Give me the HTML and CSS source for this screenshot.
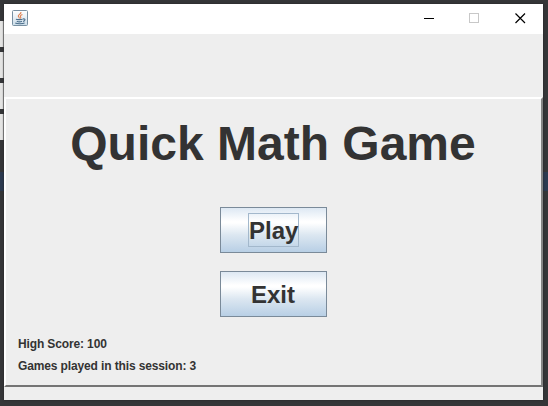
FILE: index.html
```
<!DOCTYPE html>
<html lang="en">
<head>
<meta charset="utf-8">
<title>Quick Math Game</title>
<link rel="stylesheet" href="styles.css">
</head>
<body>
<div class="behind"><i></i><i></i><i></i><i></i></div>
<main class="window">
  <header class="titlebar">
    <svg class="java" width="16" height="16" viewBox="0 0 16 16" fill="none">
      <defs><linearGradient id="tile" x1="0" y1="0" x2="0" y2="1"><stop stop-color="#fff"/><stop offset="1" stop-color="#cbdde9"/></linearGradient></defs>
      <rect x=".5" y=".5" width="15" height="15" rx="1" fill="url(#tile)" stroke="#7890a2"/>
      <path d="M9 2C9.4 4 5.8 4.6 6.3 6.2C6.6 7.1 7.6 7.4 7.2 8.5M10.4 4.6C8.4 5.4 7.8 6 8.7 7C9.1 7.6 8.7 8.1 8.3 8.5" stroke="#df8050" stroke-width="1.1"/>
      <path d="M4 9.2C5 9.8 9.5 9.7 10.5 9.2M4.8 11.2C6 11.8 9 11.7 10 11.2M10.8 9C13.8 8.2 13.5 11 11 11.4M3.3 13C5 14 11 14 12.6 12.9" stroke="#4c6f8c" stroke-width="1.1"/>
    </svg>
    <div class="controls">
      <svg width="11" height="11" shape-rendering="crispEdges"><path d="M0 5.5H10" stroke="#000"/></svg>
      <svg width="11" height="11" shape-rendering="crispEdges"><rect x=".5" y=".5" width="9" height="9" fill="none" stroke="#c8c8c8"/></svg>
      <svg width="11" height="11"><path d="M.5 .5L10 10M10 .5L.5 10" stroke="#000" stroke-width="1.2"/></svg>
    </div>
  </header>
  <section class="panel">
    <h1>Quick Math Game</h1>
    <div class="actions">
      <button class="focused"><span>Play</span></button>
      <button><span>Exit</span></button>
    </div>
    <div class="stats">
      <p class="score">High Score: 100</p>
      <p class="games">Games played in this session: 3</p>
    </div>
  </section>
</main>
</body>
</html>
```
FILE: styles.css
```
* { box-sizing: border-box; }
body {
  margin: 0;
  width: 548px;
  height: 406px;
  padding: 4px 5px 6px 4px;
  overflow: hidden;
  position: relative;
  background: linear-gradient(#353638 0 172px, #2c3a50 172px 191px, #353638 191px);
  color: #333;
  font-family: "Liberation Sans", Arial, sans-serif;
  font-weight: bold;
}
.behind {
  position: absolute;
  left: 0;
  top: 21px;
  display: grid;
  grid-template-rows: repeat(4, 26px);
  gap: 5px;
}
.behind i { width: 4px; background: #e4e4e3; border-right: 1px solid #999; }
.window {
  position: relative;
  height: 396px;
  background: #eee;
  box-shadow: 0 0 2px #222;
}
.titlebar {
  height: 30px;
  margin-bottom: 63px;
  padding: 0 17px 0 8px;
  display: flex;
  justify-content: space-between;
  align-items: center;
  background: #fff;
}
.java { position: relative; top: -1px; }
.controls { display: flex; gap: 35px; position: relative; top: -1px; }
.controls svg { display: block; }
.controls svg:first-child { margin-right: -1px; }
.panel {
  height: 290px;
  border: 2px solid;
  border-color: #fff #858585 #747474 #fff;
  display: flex;
  flex-direction: column;
}
h1 {
  margin: 17px 0 0 -1px;
  font-size: 48px;
  line-height: 56px;
  text-align: center;
  white-space: nowrap;
}
.actions {
  margin: 35px 1px 0 0;
  display: flex;
  flex-direction: column;
  align-items: center;
  gap: 18px;
}
button {
  width: 107px;
  height: 46px;
  padding: 0;
  display: flex;
  align-items: center;
  justify-content: center;
  border: 1px solid #7a8a99;
  background: linear-gradient(#dde8f3, #fff 30%, #fff 34%, #dce7f1 61%, #b8cfe5);
  color: #333;
  font: bold 24px/30px "Liberation Sans", Arial, sans-serif;
}
button span { padding-top: 2px; border: 1px solid transparent; }
.focused span { width: 51px; margin-left: 1px; border-color: #a3b8cc; }
.stats { margin: 16px 0 0 12px; font-size: 12px; line-height: 22px; letter-spacing: -.13px; }
p { margin: 0; white-space: nowrap; }
```
